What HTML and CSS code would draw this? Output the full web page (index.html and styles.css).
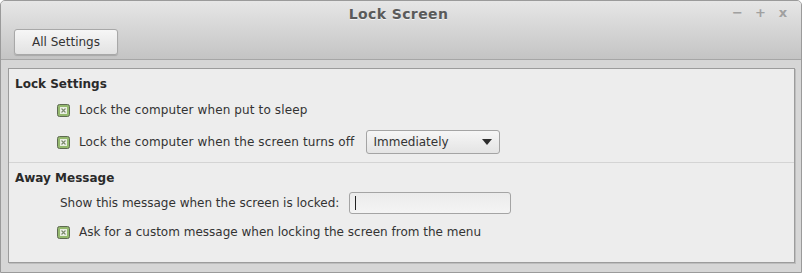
FILE: index.html
```html
<!DOCTYPE html>
<html>
 <head>
  <meta charset="utf-8">
  <link rel="stylesheet" href="styles.css">
 </head>
 <body>
  <div class="window">
   <div class="header">
    <div class="titlebar">
     <span class="title">Lock Screen</span>
     <div class="wm-buttons">
      <span class="wm">&minus;</span>
      <span class="wm">+</span>
      <span class="wm">x</span>
     </div>
    </div>
    <div class="toolbar">
     <button class="button">All Settings</button>
    </div>
   </div>

   <div class="content">
    <div class="frame">
     <div class="section first">
      <div class="heading">Lock Settings</div>
      <div class="row check-row">
       <span class="check"><svg width="13" height="13" viewBox="0 0 13 13"><rect x="0.5" y="0.5" width="12" height="12" rx="2" fill="#94b86e" stroke="#5e6a52"/><rect x="3.5" y="3.5" width="6" height="6" fill="#f4f4f4" stroke="#e8efe0"/><path d="M4.5 4.5 L8.5 8.5 M8.5 4.5 L4.5 8.5" stroke="#7b8a6c" stroke-width="1.2"/></svg></span>
       <span class="label wide">Lock the computer when put to sleep</span>
      </div>
      <div class="row check-row tall">
       <span class="check"><svg width="13" height="13" viewBox="0 0 13 13"><rect x="0.5" y="0.5" width="12" height="12" rx="2" fill="#94b86e" stroke="#5e6a52"/><rect x="3.5" y="3.5" width="6" height="6" fill="#f4f4f4" stroke="#e8efe0"/><path d="M4.5 4.5 L8.5 8.5 M8.5 4.5 L4.5 8.5" stroke="#7b8a6c" stroke-width="1.2"/></svg></span>
       <span class="label wide">Lock the computer when the screen turns off</span>
       <div class="combo">
        <span>Immediately</span>
        <svg width="10" height="6" viewBox="0 0 10 6"><path d="M0 0 H10 L5 6 Z" fill="#2e2e2e"/></svg>
       </div>
      </div>
     </div>

     <div class="section second">
      <div class="heading">Away Message</div>
      <div class="row entry-row">
       <span class="label">Show this message when the screen is locked:</span>
       <div class="entry"><span class="cursor"></span></div>
      </div>
      <div class="row check-row last">
       <span class="check"><svg width="13" height="13" viewBox="0 0 13 13"><rect x="0.5" y="0.5" width="12" height="12" rx="2" fill="#94b86e" stroke="#5e6a52"/><rect x="3.5" y="3.5" width="6" height="6" fill="#f4f4f4" stroke="#e8efe0"/><path d="M4.5 4.5 L8.5 8.5 M8.5 4.5 L4.5 8.5" stroke="#7b8a6c" stroke-width="1.2"/></svg></span>
       <span class="label">Ask for a custom message when locking the screen from the menu</span>
      </div>
     </div>
    </div>
   </div>
  </div>
 </body>
</html>
```

FILE: styles.css
```css
body {
  margin: 0;
  font-family: "DejaVu Sans", sans-serif;
  font-size: 12px;
  color: #333;
}

.window {
  width: 802px;
  height: 273px;
  box-sizing: border-box;
  border: 1px solid #9a9a9a;
  border-radius: 5px 5px 0 0;
  background: #d6d6d6;
  display: flex;
  flex-direction: column;
  overflow: hidden;
}

.header {
  height: 58px;
  border-bottom: 1px solid #a6a6a6;
  background: linear-gradient(#e6e6e6, #c4c4c4);
  display: flex;
  flex-direction: column;
}

.titlebar {
  height: 25px;
  display: flex;
  align-items: center;
  justify-content: center;
  position: relative;
}

.title {
  font-weight: bold;
  font-size: 14px;
  letter-spacing: 0.4px;
  margin-left: -5px;
  color: #5a5a5a;
  text-shadow: 0 1px 0 #f2f2f2;
}

.wm-buttons {
  position: absolute;
  right: 13px;
  top: 4px;
  display: flex;
  gap: 13px;
}

.wm {
  font-weight: bold;
  font-size: 13px;
  color: #a0a0a0;
  width: 10px;
  text-align: center;
}

.toolbar {
  padding: 3px 0 0 13px;
}

.button {
  height: 26px;
  width: 104px;
  font-family: "DejaVu Sans", sans-serif;
  font-size: 12px;
  color: #333;
  border: 1px solid #a8a8a8;
  border-radius: 3px;
  background: linear-gradient(#f6f6f6, #e2e2e2);
  box-shadow: 0 1px 1px rgba(0, 0, 0, 0.15);
}

.content {
  flex: 1;
  padding: 8px 6px 9px 7px;
  display: flex;
}

.frame {
  flex: 1;
  border: 1px solid #9c9c9c;
  box-shadow: 1px 1px 0 #bdbdbd;
  background: #ededed;
}

.section {
  padding-left: 6px;
}

.section.first {
  padding-top: 7px;
  padding-bottom: 7px;
  border-bottom: 1px solid #d4d4d4;
}

.section.second {
  padding-top: 7px;
}

.heading {
  font-weight: bold;
  line-height: 16px;
  color: #2a2a2a;
}

.label.wide {
  letter-spacing: 0.12px;
}

.row {
  display: flex;
  align-items: center;
}

.check-row {
  height: 24px;
  margin-top: 6px;
  padding-left: 42px;
}

.check-row.tall {
  height: 26px;
  margin-top: 7px;
}

.check-row.last {
  height: 20px;
  margin-top: 8px;
}

.check {
  width: 13px;
  height: 13px;
  margin-right: 9px;
  display: flex;
}

.combo {
  margin-left: 12px;
  width: 134px;
  height: 24px;
  box-sizing: border-box;
  border: 1px solid #a4a4a4;
  border-radius: 3px;
  background: linear-gradient(#f6f6f6, #e4e4e4);
  display: flex;
  align-items: center;
  justify-content: space-between;
  padding: 0 7px 0 6px;
}

.entry-row {
  height: 22px;
  margin-top: 6px;
  padding-left: 45px;
}

.entry {
  margin-left: 10px;
  width: 162px;
  height: 22px;
  box-sizing: border-box;
  border: 1px solid #a4a4a4;
  border-radius: 3px;
  background: linear-gradient(#ebebeb, #f4f4f4);
  display: flex;
  align-items: center;
  padding-left: 5px;
}

.cursor {
  width: 1px;
  height: 14px;
  background: #222;
}
```
